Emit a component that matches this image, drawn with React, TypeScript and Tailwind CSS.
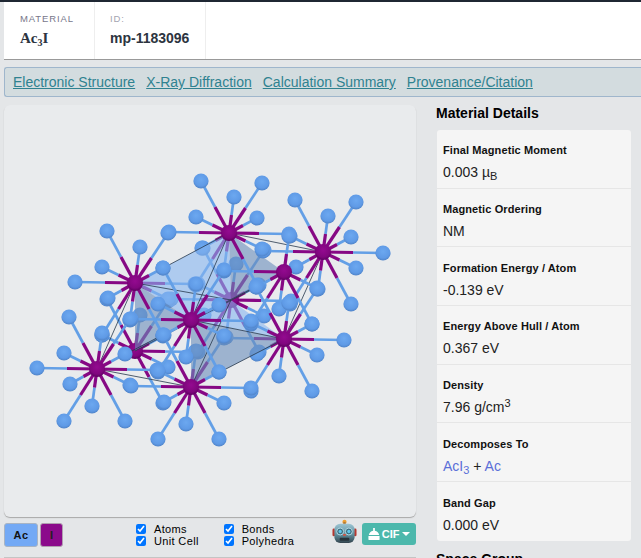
type Site = { x: number; y: number; back?: number[]; only?: number[] };

// neighbours of an I atom on screen, same for every site
const offsets = [
  [-28, -52], [5, -36], [33, -50], [-33, -16], [-60, -1], [-27, 15],
  [-5, 37], [-33, 52], [28, 52], [33, 16], [60, 1], [28, -15],
];

const far: Site[] = [
  { x: 231, y: 300 },
  { x: 135, y: 351, only: [0, 1, 2, 3, 8, 9, 10, 11] },
];

const near: Site[] = [
  { x: 323, y: 252 },
  { x: 229, y: 233, back: [5, 6, 7] },
  { x: 284, y: 272, only: [1, 4, 5, 6, 7, 8, 9] },
  { x: 135, y: 283, back: [9, 10] },
  { x: 284, y: 339, back: [4, 5] },
  { x: 191, y: 320 },
  { x: 97, y: 369 },
  { x: 191, y: 387, back: [1, 2] },
];

const cellLines = [
  [97, 369, 135, 283], [191, 387, 231, 300], [191, 320, 229, 233], [284, 339, 323, 252],
  [97, 369, 191, 387], [191, 320, 284, 339], [135, 283, 231, 300], [229, 233, 323, 252],
  [97, 369, 284, 272], [191, 387, 284, 339], [135, 283, 229, 233], [135, 351, 323, 252],
];

const polyhedra = [
  { points: '135,283 229,233 231,300 191,320', fill: '#87b5f0' },
  { points: '229,233 284,272 231,300', fill: '#6b8ebb' },
  { points: '135,283 191,320 135,351', fill: '#6b8ebb' },
  { points: '191,320 231,300 284,339', fill: '#87b5f0' },
  { points: '191,320 284,339 191,387', fill: '#6b8ebb' },
];

const details = [
  { label: 'Final Magnetic Moment', value: <>0.003 µ<sub className="text-[11px]">B</sub></> },
  { label: 'Magnetic Ordering', value: 'NM' },
  { label: 'Formation Energy / Atom', value: '-0.139 eV' },
  { label: 'Energy Above Hull / Atom', value: '0.367 eV' },
  { label: 'Density', value: <>7.96 g/cm<sup className="text-[11px]">3</sup></> },
  {
    label: 'Decomposes To',
    value: (
      <>
        <span className="text-[#5a6fd8]">AcI<sub className="text-[11px]">3</sub></span> + <span className="text-[#5a6fd8]">Ac</span>
      </>
    ),
  },
  { label: 'Band Gap', value: '0.000 eV' },
];

function visible(site: Site, i: number, layer: 'back' | 'front') {
  if (site.only && !site.only.includes(i)) return false;
  const isBack = site.back?.includes(i) ?? false;
  return (layer === 'back') === isBack;
}

function Cluster({ site, layer }: { site: Site; layer: 'back' | 'front' }) {
  return (
    <g>
      {offsets.map(([dx, dy], i) =>
        visible(site, i, layer) ? (
          <g key={i}>
            <line x1={site.x + dx / 2} y1={site.y + dy / 2} x2={site.x + dx} y2={site.y + dy} stroke="#639fe6" strokeWidth={2.7} />
            <line x1={site.x} y1={site.y} x2={site.x + dx / 2} y2={site.y + dy / 2} stroke="#860884" strokeWidth={3.2} />
          </g>
        ) : null,
      )}
      {offsets.map(([dx, dy], i) =>
        visible(site, i, layer) ? <circle key={i} cx={site.x + dx} cy={site.y + dy} r={7.6} fill="url(#blueBall)" /> : null,
      )}
      {layer === 'front' && <circle cx={site.x} cy={site.y} r={8} fill="url(#purpleBall)" />}
    </g>
  );
}

function Structure() {
  return (
    <svg viewBox="4 105 412 412" className="block w-full h-full">
      <defs>
        <radialGradient id="blueBall" cx="50%" cy="40%" r="60%">
          <stop offset="0%" stopColor="#6ca8f0" />
          <stop offset="72%" stopColor="#5f9ae6" />
          <stop offset="100%" stopColor="#4f82c6" />
        </radialGradient>
        <radialGradient id="purpleBall" cx="50%" cy="38%" r="62%">
          <stop offset="0%" stopColor="#940a90" />
          <stop offset="70%" stopColor="#80067e" />
          <stop offset="100%" stopColor="#5c0060" />
        </radialGradient>
      </defs>

      {far.map((s, i) => (
        <Cluster key={i} site={s} layer="front" />
      ))}
      {near.map((s, i) => (
        <Cluster key={i} site={s} layer="back" />
      ))}

      {polyhedra.map((p) => (
        <polygon key={p.points} points={p.points} fill={p.fill} fillOpacity={0.6} />
      ))}

      {cellLines.map(([x1, y1, x2, y2]) => (
        <line key={`${x1}-${y1}-${x2}-${y2}`} x1={x1} y1={y1} x2={x2} y2={y2} stroke="#27384c" strokeWidth={0.8} />
      ))}

      {near.map((s, i) => (
        <Cluster key={i} site={s} layer="front" />
      ))}
    </svg>
  );
}

function Robot() {
  return (
    <svg viewBox="0 0 26 26" className="w-[25px] h-[25px] shrink-0">
      <defs>
        <linearGradient id="robotHead" x1="0" y1="0" x2="0" y2="1">
          <stop offset="0%" stopColor="#9cc4d2" />
          <stop offset="55%" stopColor="#5f909f" />
          <stop offset="100%" stopColor="#33434d" />
        </linearGradient>
      </defs>
      <circle cx="13" cy="3" r="2.2" fill="#f0a030" />
      <rect x="11.8" y="3" width="2.4" height="3" fill="#b07a3a" />
      <rect x="0.5" y="10" width="3" height="8" rx="1.4" fill="#b5372f" />
      <rect x="22.5" y="10" width="3" height="8" rx="1.4" fill="#b5372f" />
      <rect x="2.5" y="5" width="21" height="20" rx="6" fill="url(#robotHead)" />
      <circle cx="8.5" cy="13" r="3.6" fill="#3f6f80" stroke="#b5dbe6" strokeWidth="1" />
      <circle cx="17.5" cy="13" r="3.6" fill="#3f6f80" stroke="#b5dbe6" strokeWidth="1" />
      <circle cx="8.5" cy="13" r="1.7" fill="#62c6ea" />
      <circle cx="17.5" cy="13" r="1.7" fill="#62c6ea" />
      <path d="M11.8 15.5h2.4l.4 2h-3.2z" fill="#d9503f" />
      <rect x="8" y="19.5" width="10" height="3" rx="1" fill="#27333b" />
    </svg>
  );
}

function DownloadIcon() {
  return (
    <svg viewBox="0 0 14 14" className="w-[12px] h-[12px] fill-white">
      <path d="M6 0h2v3.2c2.8.5 4.6 2.4 5 5H1c.4-2.6 2.2-4.5 5-5z" />
      <path d="M0.5 9.2h13V13a1 1 0 0 1-1 1h-11a1 1 0 0 1-1-1z" />
    </svg>
  );
}

function Check({ label }: { label: string }) {
  return (
    <label className="flex items-center h-3 text-[11px] tracking-[0.35px] text-black">
      <input type="checkbox" defaultChecked className="w-[10px] h-[10px] m-0 mr-2" />
      {label}
    </label>
  );
}

export default function App() {
  return (
    <div className="h-[558px] overflow-hidden bg-[#e4e6e8] font-['Liberation_Sans',Arial,sans-serif]">
      <div className="h-[2px] bg-[#1f2733]" />

      {/* material header */}
      <div className="ml-1 h-[58px] flex bg-white border-b border-[#999]">
        <div className="w-[91px] pl-4 pt-[11px] border-r border-[#eeeeee]">
          <div className="text-[9.5px] leading-3 tracking-[0.9px] text-[#77778a]">MATERIAL</div>
          <div className="mt-[3px] text-[15px] leading-5 font-bold text-[#2c3440] font-['Liberation_Serif',serif]">
            Ac<sub className="text-[10px]">3</sub>I
          </div>
        </div>
        <div className="w-[111px] pl-[15px] pt-[11px] border-r border-[#eeeeee]">
          <div className="text-[9.5px] leading-3 tracking-[0.9px] text-[#a4a4b0]">ID:</div>
          <div className="mt-[3px] text-[14px] leading-5 font-bold text-[#2c3440]">mp-1183096</div>
        </div>
      </div>

      {/* section links */}
      <div className="ml-1 mt-[7px] h-[30px] flex items-center gap-[11px] pl-2 pt-px bg-[#d3dcdf] border border-r-0 border-[#9fb6cc] rounded-l-[3px] text-[14px] text-[#2f8290]">
        <a className="underline">Electronic Structure</a>
        <a className="underline">X-Ray Diffraction</a>
        <a className="underline">Calculation Summary</a>
        <a className="underline">Provenance/Citation</a>
      </div>

      <div className="flex pt-2 pl-1">
        <div className="w-[412px] shrink-0">
          <div className="h-[412px] bg-[#e9ebed] rounded-md shadow-[0_1px_1px_#a8a8a8]">
            <Structure />
          </div>
          <div className="h-[40px] flex pt-[6px]">
            <div className="flex gap-0.5 h-6">
              <div className="w-[34px] flex items-center justify-center bg-[#73a9f5] border border-[#a8b4c4] rounded-[3px] text-[11px] font-bold tracking-[0.5px] text-[#111]">Ac</div>
              <div className="w-[23px] flex items-center justify-center bg-[#8b0a8b] border border-[#b0a0b0] rounded-[3px] text-[11px] font-bold text-[#222]">I</div>
            </div>
            <div className="ml-[73px] w-[88px] flex flex-col">
              <Check label="Atoms" />
              <Check label="Unit Cell" />
            </div>
            <div className="w-[109px] flex flex-col">
              <Check label="Bonds" />
              <Check label="Polyhedra" />
            </div>
            <div className="-mt-1">
              <Robot />
            </div>
            <button className="ml-[5px] w-[54px] h-[22px] flex items-center justify-center gap-[2px] bg-[#4cb8ac] rounded-[3px] text-[11px] font-bold text-white">
              <DownloadIcon />
              CIF
              <span className="ml-[1px] w-0 h-0 border-x-[4px] border-x-transparent border-t-[4px] border-t-white" />
            </button>
          </div>
          <div className="border-t border-[#c4c4c4]" />
        </div>

        <div className="ml-5 w-[195px]">
          <h2 className="h-[17px] text-[14px] leading-4 font-bold text-black">Material Details</h2>
          <div className="ml-px mt-[8px] w-[194px] bg-[#f5f5f5] rounded-[3px]">
            {details.map((d, i) => (
              <div key={d.label} className={`h-[58.7px] pl-[6px] pt-[13.4px] ${i < details.length - 1 ? 'border-b border-[#e6e6e6]' : ''}`}>
                <div className="text-[11px] leading-[14px] font-bold tracking-[0.1px] text-[#111]">{d.label}</div>
                <div className="mt-[6px] text-[14px] leading-[18px] text-[#222]">{d.value}</div>
              </div>
            ))}
          </div>
          <h2 className="mt-[10px] text-[14px] leading-4 font-bold text-black">Space Group</h2>
        </div>
      </div>
    </div>
  );
}
